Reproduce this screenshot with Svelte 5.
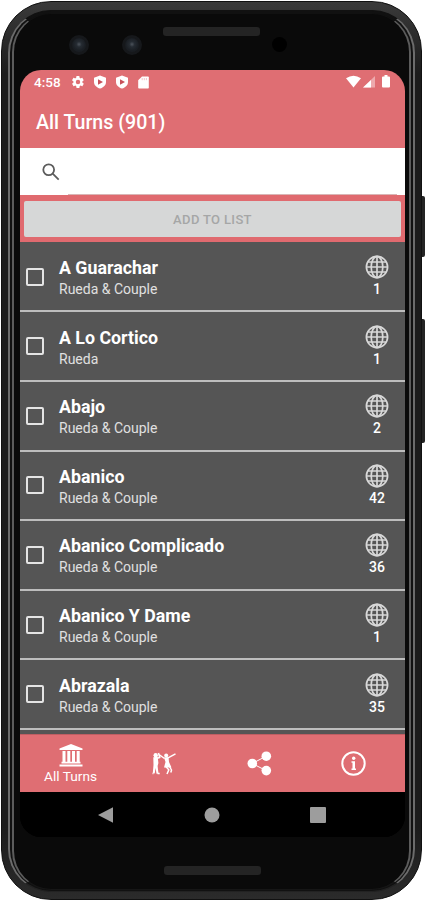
<script>
    let turns = $state([
        { name: 'A Guarachar', type: 'Rueda & Couple', count: 1, checked: false },
        { name: 'A Lo Cortico', type: 'Rueda', count: 1, checked: false },
        { name: 'Abajo', type: 'Rueda & Couple', count: 2, checked: false },
        { name: 'Abanico', type: 'Rueda & Couple', count: 42, checked: false },
        { name: 'Abanico Complicado', type: 'Rueda & Couple', count: 36, checked: false },
        { name: 'Abanico Y Dame', type: 'Rueda & Couple', count: 1, checked: false },
        { name: 'Abrazala', type: 'Rueda & Couple', count: 35, checked: false }
    ]);
    let total = $state(901);
    let query = $state('');

    let visible = $derived(turns.filter((t) => t.name.toLowerCase().includes(query.toLowerCase())));
    let selected = $derived(turns.filter((t) => t.checked).length);
</script>

{#snippet shield()}
    <svg class="shield" viewBox="0 0 14 14">
        <path d="M7 0.5 13 2.7V7c0 3.1-2.5 5.5-6 6.6C3.5 12.5 1 10.1 1 7V2.7z" fill="#fff" />
        <path d="M5 4.2 10 7 5 9.8z" fill="#c8515a" />
    </svg>
{/snippet}

<div class="device">
    <span class="side-key power"></span>
    <span class="side-key volume"></span>
    <div class="body">
        <div class="rim">
            <div class="rim-inner">
                <div class="bezel-top">
                    <span class="camera first"></span>
                    <span class="camera second"></span>
                    <span class="speaker"></span>
                    <span class="sensor"></span>
                </div>

                <div class="screen">
                    <div class="status">
                        <span class="time">4:58</span>
                        <svg class="gear" viewBox="0 0 24 24">
                            <path fill="#fff" fill-rule="evenodd" d="M19.4 13c.1-.6.1-1.4 0-2l2.1-1.7c.3-.2.3-.5.1-.8l-2-3.4c-.1-.3-.4-.4-.7-.3l-2.5 1c-.5-.4-1.1-.7-1.7-1l-.4-2.6c0-.3-.2-.5-.5-.5h-4c-.3 0-.5.2-.5.5l-.4 2.6c-.6.3-1.2.6-1.7 1l-2.5-1c-.3-.1-.6 0-.7.3l-2 3.4c-.2.3-.1.6.1.8L4.3 11c-.1.6-.1 1.4 0 2l-2.1 1.7c-.2.2-.3.5-.1.8l2 3.4c.1.3.4.4.7.3l2.5-1c.5.4 1.1.7 1.7 1l.4 2.6c0 .3.2.5.5.5h4c.3 0 .5-.2.5-.5l.4-2.6c.6-.3 1.2-.6 1.7-1l2.5 1c.3.1.6 0 .7-.3l2-3.4c.1-.3.1-.6-.1-.8zM12 15.8a3.8 3.8 0 1 1 0-7.6 3.8 3.8 0 0 1 0 7.6z" />
                        </svg>
                        {@render shield()}
                        {@render shield()}
                        <svg class="card" viewBox="0 0 11 13">
                            <path d="M4 .5h6q.8 0 .8.8v10.4q0 .8-.8.8H1q-.8 0-.8-.8V4.300z" fill="#fff" />
                            <path d="M4.2 2v2.200M6.300 2v2.200M8.400 2v2.200" stroke="#e07078" stroke-width=".4" />
                        </svg>
                        <svg class="signals" viewBox="0 0 46 14">
                            <path d="M0 3.2Q7.500-1.800 15 3.200L7.500 12.500z" fill="#fff" />
                            <path d="M29 1v11.500H17z" fill="#eda9ad" />
                            <path d="M25 5v7.500h-8z" fill="#fff" />
                            <path d="M38.5 0h3v1.500H43q1 0 1 1v9q0 1-1 1h-6q-1 0-1-1v-9q0-1 1-1h1.500z" fill="#fff" />
                        </svg>
                    </div>

                    <h1>All Turns ({total})</h1>

                    <label class="search">
                        <svg viewBox="0 0 18 18">
                            <circle cx="6.7" cy="6.7" r="5.4" />
                            <path d="M10.7 10.7 16.7 16.7" />
                        </svg>
                        <input type="text" aria-label="Search" bind:value={query} />
                    </label>

                    <div class="add">
                        <button disabled={selected === 0}>ADD TO LIST</button>
                    </div>

                    <div class="list">
                        {#each visible as turn (turn.name)}
                            <label class="row">
                                <input type="checkbox" bind:checked={turn.checked} />
                                <div class="text">
                                    <strong>{turn.name}</strong>
                                    <span>{turn.type}</span>
                                </div>
                                <div class="videos">
                                    <svg viewBox="0 0 24 24">
                                        <circle cx="12" cy="12" r="10.6" />
                                        <ellipse cx="12" cy="12" rx="5.8" ry="10.6" />
                                        <path d="M12 1v22M1 12h22M3 7h18M3 17h18" />
                                    </svg>
                                    <span>{turn.count}</span>
                                </div>
                            </label>
                        {/each}
                    </div>

                    <nav class="tabs">
                        <div class="tab">
                            <svg class="bank" viewBox="0 0 24 23" fill="#fff">
                                <path d="M12 0 23.5 4.5V6H.5V4.5z" />
                                <path d="M3.5 7h3v11h-3zM8.3 7h3v11h-3zM13 7h3v11h-3zM17.7 7h3v11h-3z" />
                                <path d="M2.5 17.8h19v1.800h-19zM.5 20.400h23v2H.5z" />
                            </svg>
                            <span>All Turns</span>
                        </div>
                        <div class="tab">
                            <svg class="dancers" viewBox="0 0 25 25">
                                <g fill="#fff">
                                    <circle cx="3.7" cy="4.2" r="2.2" />
                                    <circle cx="14.2" cy="4.4" r="2" />
                                    <path d="M1.3 6.3 5.700 5.800 6.400 12 5.600 15 6.500 22.500 4.500 22.800 3.600 17 2.700 22.500.8 22 1.500 14z" />
                                    <path d="M12 6.5 16.500 6 17 11 19.500 16.500 12 16.500 13.500 11z" />
                                </g>
                                <g class="limbs">
                                    <path d="M4.5 7.500 7.700 6.500 6.500 2M7 3.500 12.500 7.500M16 6.800 23.500 2.800M13.800 15.500l3 3.300-1.800 4.200M17.500 15.500l2 3.500-.7 2.500M1.500 22.500H.5M5.500 22.500h2.200" />
                                </g>
                            </svg>
                        </div>
                        <div class="tab">
                            <svg class="share" viewBox="0 0 25 25" fill="#fff">
                                <path d="M19.5 5 5.2 12.5 19.5 19.8" fill="none" stroke="#fff" stroke-width="1" />
                                <circle cx="5.3" cy="12.5" r="4.8" />
                                <circle cx="19.3" cy="5.2" r="4.8" />
                                <circle cx="19.3" cy="19.6" r="4.8" />
                            </svg>
                        </div>
                        <div class="tab">
                            <svg class="info" viewBox="0 0 25 25">
                                <circle cx="12.5" cy="12.5" r="11.2" fill="none" stroke="#fff" stroke-width="2" />
                                <circle cx="12.7" cy="7.3" r="1.7" fill="#fff" />
                                <path d="M10.5 10.3H14v7.200h1V19h-4.500v-1.500h1v-5.700h-1z" fill="#fff" />
                            </svg>
                        </div>
                    </nav>

                    <div class="system">
                        <svg viewBox="0 0 16 16"><path d="M0 8 15 .3v15.4z" /></svg>
                        <svg viewBox="0 0 16 16"><circle cx="8" cy="8" r="7.5" /></svg>
                        <svg viewBox="0 0 16 16"><rect width="16" height="16" rx="1" /></svg>
                    </div>
                </div>

                <span class="speaker bottom"></span>
            </div>
        </div>
    </div>
</div>

<style>
    :global(body) {
        background: #fff;
        overflow: hidden;
    }

    .device {
        position: relative;
        width: 425px;
        height: 900px;
        padding: 1px 3px 0 1px;
        box-sizing: border-box;
        font-family: Roboto, sans-serif;
        color: #fff;
    }

    .device * {
        box-sizing: border-box;
    }

    .side-key {
        position: absolute;
        right: 0;
        width: 6px;
        border-radius: 2px;
        background: #242424;
    }

    .power {
        top: 196px;
        height: 61px;
    }

    .volume {
        top: 319px;
        height: 124px;
    }

    .body {
        position: relative;
        height: 899px;
        padding: 8px 6px 7px;
        border: 1px solid #111;
        border-radius: 50px;
        background: linear-gradient(#3a3a3a, #1c1c1c 8%, #1c1c1c 92%, #2b2b2b);
    }

    .rim {
        height: 100%;
        padding: 2px 2px 1px;
        border: 2px solid #6c6c6c;
        border-top: 1px solid #111;
        border-bottom: 1px solid #222;
        border-radius: 43px;
        background: #111;
    }

    .rim-inner {
        display: flex;
        flex-direction: column;
        height: 100%;
        padding: 0 4px 0 6px;
        border: 2px solid #5c5c5c;
        border-top: 1px solid #111;
        border-bottom: 1px solid #161616;
        border-radius: 39px;
        background: #0a0a0a;
    }

    .bezel-top {
        display: flex;
        flex: none;
        align-items: flex-start;
        height: 56px;
        padding: 13px 0 0 49px;
    }

    .camera {
        width: 20px;
        height: 20px;
        margin-top: 8px;
        border: 3px solid #16181b;
        border-radius: 50%;
        background: radial-gradient(circle at 50% 45%, #4c535b 0, #252b32 25%, #1a1e23 60%);
    }

    .second {
        margin-left: 33px;
    }

    .speaker {
        width: 97px;
        height: 9px;
        margin-left: 21px;
        border-radius: 3px;
        background: #242424;
    }

    .sensor {
        width: 15px;
        height: 15px;
        margin: 10px 0 0 12px;
        border-radius: 50%;
        background: #000;
    }

    .speaker.bottom {
        align-self: center;
        margin: 29px 0 0;
    }

    .screen {
        display: flex;
        flex: none;
        flex-direction: column;
        height: 767px;
        overflow: hidden;
        border-radius: 21px;
        background: linear-gradient(#df6e73 50%, #000 50%);
    }

    .status {
        display: flex;
        flex: none;
        align-items: center;
        height: 26px;
        padding: 0 14px 2px;
    }

    .time {
        width: 37px;
        font-size: 13.5px;
        font-weight: 500;
    }

    .gear {
        width: 14px;
        height: 14px;
        margin-right: 8px;
    }

    .shield {
        width: 14px;
        height: 14px;
        margin-right: 8px;
    }

    .card {
        width: 11px;
        height: 13px;
        margin-left: 1px;
    }

    .signals {
        width: 46px;
        height: 14px;
        margin-left: auto;
        margin-right: -1px;
    }

    h1 {
        flex: none;
        height: 52px;
        margin: 0;
        padding-left: 16px;
        font-size: 19.6px;
        font-weight: 500;
        line-height: 53px;
    }

    .search {
        display: flex;
        flex: none;
        align-items: center;
        height: 47px;
        padding: 0 8px 0 22px;
        background: #fff;
    }

    .search svg {
        width: 18px;
        height: 18px;
        margin-right: 8px;
        fill: none;
        stroke: #5c5c5c;
        stroke-width: 1.8;
    }

    .search input {
        flex: 1;
        height: 47px;
        padding: 0;
        border: 0;
        border-bottom: 1px solid #d9b5b5;
        outline: 0;
        background: none;
        font: 16px Roboto, sans-serif;
    }

    .add {
        flex: none;
        height: 47px;
        padding: 6px 4px 5px;
        background: #e06a6f;
    }

    .add button {
        display: block;
        width: 100%;
        height: 36px;
        padding: 0;
        border: 0;
        border-radius: 2px;
        background: #d6d7d7;
        color: #a5a6a6;
        font: 500 13px Roboto, sans-serif;
        letter-spacing: 0.35px;
    }

    .list {
        flex: none;
        height: 492px;
        padding-top: 0.8px;
        background: #555;
    }

    .row {
        display: flex;
        align-items: center;
        height: 69.6px;
        padding: 0 6px;
        border-bottom: 2px solid #bdbdbd;
    }

    .row input {
        width: 18px;
        height: 18px;
        margin: 0;
        border: 2px solid #e4e4e4;
        border-radius: 2px;
        appearance: none;
    }

    .row input:checked {
        background: #e07075;
    }

    .text {
        display: flex;
        flex: 1;
        flex-direction: column;
        padding: 3px 0 0 15px;
    }

    .text strong {
        font-size: 17.8px;
        line-height: 22px;
    }

    .text span {
        color: #e0e0e0;
        font-size: 14px;
        line-height: 20px;
    }

    .videos {
        display: flex;
        flex-direction: column;
        align-items: center;
        width: 44px;
        padding-top: 1px;
        font-size: 14px;
        font-weight: 500;
        line-height: 20px;
    }

    .videos svg {
        width: 24px;
        height: 24px;
        fill: none;
        stroke: #d8d8d8;
        stroke-width: 1.7;
    }

    .tabs {
        display: grid;
        flex: none;
        grid-template-columns: 101px 86px 104px 85px;
        height: 58px;
        border-top: 1px solid #be5e63;
        background: #df6e73;
    }

    .tab {
        display: flex;
        flex-direction: column;
        align-items: center;
        justify-content: center;
        font-size: 13.7px;
        line-height: 16px;
    }

    .bank {
        width: 24px;
        height: 23px;
        margin-bottom: 1px;
    }

    .dancers,
    .share,
    .info {
        width: 25px;
        height: 25px;
    }

    .limbs {
        fill: none;
        stroke: #fff;
        stroke-width: 1.5;
    }

    .system {
        display: flex;
        flex: 1;
        align-items: center;
        justify-content: space-between;
        padding: 0 79px 0 78px;
        background: #000;
    }

    .system svg {
        width: 16px;
        height: 16px;
        fill: #9d9d9d;
    }
</style>
